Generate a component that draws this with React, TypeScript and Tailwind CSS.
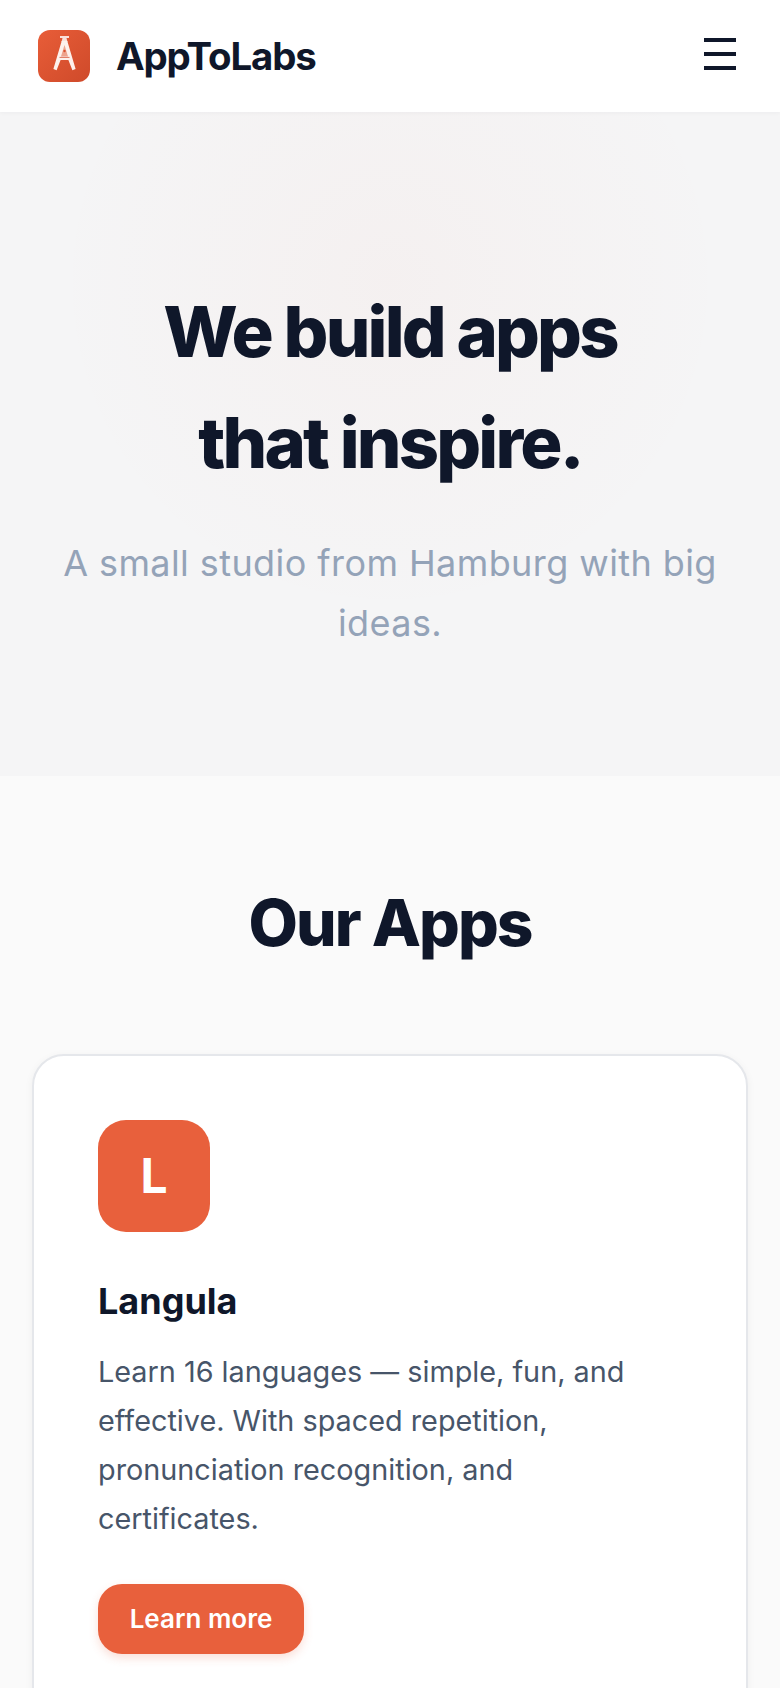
import React from 'react';

const FONT = "font-['Inter',sans-serif]";

function TowerLogo() {
  return (
    <div className="w-[52px] h-[52px] rounded-[12px] bg-gradient-to-br from-[#e85d38] to-[#cf4a2a] flex items-center justify-center">
      <svg width="52" height="52" viewBox="0 0 52 52" fill="none">
        <path d="M22 6h9v2h-9z" fill="#fdf1ec" fillOpacity="0.9" />
        <path d="M24.5 8h4l1 4h-6z" fill="#fdf1ec" fillOpacity="0.9" />
        <path d="M23.7 11h5.6L37.6 39 34.4 40.2 30.4 30H22.6L18.6 40.2 15.4 39Z" fill="#fdf1ec" />
        <path d="M26.5 15 30 26.5H23Z" fill="#eea48e" />
        <circle cx="26.5" cy="21" r="1.2" fill="#d9522f" />
        <path d="M21.5 27.4h10" stroke="#d9654a" strokeWidth="0.9" />
      </svg>
    </div>
  );
}

function Header() {
  return (
    <header className="h-[112px] bg-white flex items-center justify-between pl-[38px] pr-[44px] shadow-[0_1px_4px_rgba(15,23,42,0.04)] relative z-10">
      <div className="flex items-center gap-[26px]">
        <TowerLogo />
        <span className="text-[38.4px] font-bold tracking-[-1.15px] text-[#0f172a] leading-none">AppToLabs</span>
      </div>
      <button type="button" className="w-[32px] flex flex-col gap-[10px] -mt-[4px]">
        <span className="block h-[4px] bg-[#0f172a]" />
        <span className="block h-[4px] bg-[#0f172a]" />
        <span className="block h-[4px] bg-[#0f172a]" />
      </button>
    </header>
  );
}

function Hero() {
  return (
    <section className="relative h-[664px] bg-[#f5f5f6] overflow-hidden">
      <div className="absolute left-[70px] top-[-150px] w-[640px] h-[640px] rounded-full bg-[radial-gradient(circle,rgba(232,93,56,0.03)_0%,rgba(232,93,56,0)_75%)]" />
      <div className="relative flex flex-col items-center pt-[164px] px-[48px] text-center">
        <h1 className="text-[70.4px] font-extrabold leading-[111px] tracking-[-2.82px] text-[#0f172a]">
          We build apps
          <br />
          that inspire.
        </h1>
        <p className="mt-[35px] text-[36px] leading-[60px] tracking-[0.42px] text-[#94a3b8]">
          A small studio from Hamburg with big ideas.
        </p>
      </div>
    </section>
  );
}

function AppCard() {
  return (
    <div className="mt-[91px] mx-[32px] bg-white rounded-[32px] border-2 border-[#e5e7eb] shadow-[0_2px_8px_rgba(15,23,42,0.05)] pt-[64px] px-[64px] pb-[64px]">
      <div className="w-[112px] h-[112px] rounded-[28px] bg-[#e8603c] flex items-center justify-center">
        <span className="text-[48px] font-bold text-white">L</span>
      </div>
      <h3 className="mt-[41px] text-[36px] leading-[56px] font-bold text-[#0f172a]">Langula</h3>
      <p className="mt-[19px] text-[28.8px] leading-[48.96px] text-[#475569]">
        Learn 16 languages — simple, fun, and effective. With spaced repetition, pronunciation recognition, and certificates.
      </p>
      <button type="button" className="mt-[40px] w-[206px] h-[70px] rounded-[24px] bg-[#e8603c] text-white text-[26px] font-semibold shadow-[0_4px_10px_rgba(232,96,60,0.2)]">
        Learn more
      </button>
    </div>
  );
}

export default function App(): React.JSX.Element {
  return (
    <div className={`${FONT} h-[1688px] overflow-hidden bg-[#fafafa]`}>
      <Header />
      <Hero />
      <section className="pt-[107px]">
        <h2 className="text-center text-[64px] leading-[80px] font-extrabold tracking-[-1.92px] text-[#0f172a]">Our Apps</h2>
        <AppCard />
      </section>
    </div>
  );
}
